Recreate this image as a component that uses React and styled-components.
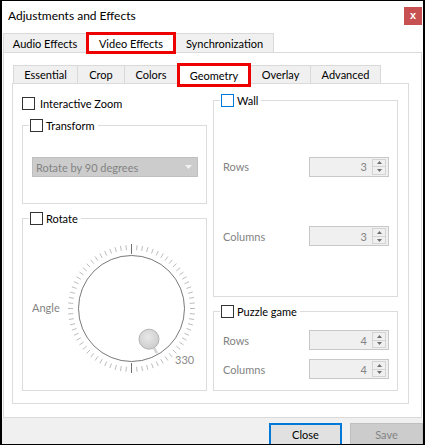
import React from "react";
import styled, { createGlobalStyle, css } from "styled-components";

const GlobalStyle = createGlobalStyle`
  html, body {
    margin: 0;
    padding: 0;
    background: #fff;
  }
  body {
    font-family: Lato, "Liberation Sans", sans-serif;
    font-size: 11px;
    color: #000;
  }
  * {
    box-sizing: border-box;
  }
`;

const Window = styled.div`
  width: 425px;
  height: 445px;
  border: solid #000;
  border-width: 1px 2px 1px 2px;
  background: #fff;
  display: flex;
  flex-direction: column;
  overflow: hidden;
`;

const TitleBar = styled.div`
  height: 31px;
  flex: none;
  display: flex;
  align-items: center;
  padding: 0 1px 2px 6px;
  font-size: 12px;
`;

const CloseX = styled.div`
  margin-left: auto;
  width: 18px;
  height: 18px;
  background: #c75050;
  color: #fff;
  font: bold 11px "Liberation Sans", sans-serif;
  display: flex;
  align-items: center;
  justify-content: center;
  padding-bottom: 2px;
`;

const TabBar = styled.div`
  flex: none;
  display: flex;
  align-items: flex-end;
  height: 20px;
  padding-left: 1px;
  position: relative;
  z-index: 1;
`;

const Tab = styled.div`
  width: ${(p) => p.$w}px;
  height: ${(p) => p.$h}px;
  display: flex;
  align-items: center;
  justify-content: center;
  background: #f0f0f0;
  border: 1px solid #d9d9d9;
  border-bottom: none;
  white-space: nowrap;
  & + & {
    margin-left: -1px;
  }
  ${(p) =>
    p.$active &&
    css`
      background: #fff;
      border: 3px solid #ee0000;
      margin-bottom: -${p.$drop}px;
      position: relative;
      z-index: 1;
    `}
`;

const Pane = styled.div`
  flex: 1;
  min-height: 0;
  margin: 0 1px;
  border: 1px solid #dadada;
  display: flex;
  flex-direction: column;
  padding: 10px 12px 13px 8px;
`;

const InnerPane = styled.div`
  flex: 1;
  border: 1px solid #dcdcdc;
  display: grid;
  grid-template-columns: 1fr 1fr;
  column-gap: 6px;
  padding: 0 10px 12px 9px;
`;

const Column = styled.div`
  display: flex;
  flex-direction: column;
  padding-top: ${(p) => p.$top}px;
  min-width: 0;
`;

const CheckRow = styled.label`
  display: flex;
  align-items: center;
  gap: ${(p) => p.$gap || 3}px;
  height: 13px;
  white-space: nowrap;
  margin-bottom: ${(p) => p.$below || 0}px;
`;

const Box = styled.span`
  width: 13px;
  height: 13px;
  flex: none;
  background: #fff;
  border: 1px solid ${(p) => (p.$focus ? "#0078d7" : "#333")};
`;

const Group = styled.fieldset`
  margin: ${(p) => p.$gapTop || 0}px 0 0;
  padding: 0;
  min-width: 0;
  border: 1px solid #dcdcdc;
  display: flex;
  flex-direction: column;
  ${(p) => p.$grow && "flex: 1;"}
`;

const Legend = styled.legend`
  margin-left: 6px;
  padding: 0 3px 0 1px;
  height: 14px;
  display: flex;
  align-items: center;
  gap: 3px;
  white-space: nowrap;
`;

const GroupBody = styled.div`
  flex: 1;
  display: flex;
  flex-direction: ${(p) => p.$dir || "column"};
  justify-content: ${(p) => p.$justify || "flex-start"};
  align-items: ${(p) => p.$align || "stretch"};
  gap: ${(p) => p.$gap || 0}px;
  padding: ${(p) => p.$pad};
`;

const Combo = styled.div`
  height: 20px;
  background: #cccccc;
  border: 1px solid #c0c0c0;
  display: flex;
  align-items: center;
  justify-content: space-between;
  padding: 0 5px 0 3px;
  color: #838383;
`;

const Muted = styled.span`
  color: #838383;
`;

const FieldRow = styled.div`
  display: flex;
  align-items: center;
  justify-content: space-between;
`;

const Spin = styled.div`
  width: 80px;
  height: 20px;
  border: 1px solid #c8c8c8;
  background: #f0f0f0;
  display: flex;
  padding: 1px 2px 1px 0;
  color: #838383;
`;

const SpinValue = styled.span`
  flex: 1;
  align-self: center;
  text-align: right;
  padding-right: 5px;
`;

const SpinArrows = styled.div`
  width: 14px;
  border: 1px solid #d4d4d4;
  display: flex;
  flex-direction: column;
`;

const SpinStep = styled.div`
  flex: 1;
  display: flex;
  align-items: center;
  justify-content: center;
  & + & {
    border-top: 1px solid #d4d4d4;
  }
`;

const Footer = styled.div`
  height: 26px;
  flex: none;
  background: #f0f0f0;
  display: flex;
  justify-content: flex-end;
  align-items: flex-start;
  gap: 8px;
  padding-top: 5px;
  overflow: hidden;
`;

const Button = styled.div`
  width: 73px;
  height: 23px;
  flex: none;
  display: flex;
  align-items: center;
  justify-content: center;
  ${(p) =>
    p.$default
      ? css`
          background: #e1e1e1;
          border: 2px solid #0078d7;
          color: #000;
        `
      : css`
          background: #cccccc;
          border: 1px solid #bfbfbf;
          color: #838383;
        `}
`;

const Triangle = ({ up, color = "#6e6e6e", w = 5, h = 3 }) => (
  <svg width={w} height={h} viewBox={`0 0 ${w} ${h}`}>
    <polygon
      points={up ? `0,${h} ${w / 2},0 ${w},${h}` : `0,0 ${w},0 ${w / 2},${h}`}
      fill={color}
    />
  </svg>
);

function SpinBox({ value }) {
  return (
    <Spin>
      <SpinValue>{value}</SpinValue>
      <SpinArrows>
        <SpinStep>
          <Triangle up />
        </SpinStep>
        <SpinStep>
          <Triangle />
        </SpinStep>
      </SpinArrows>
    </Spin>
  );
}

function AngleDial({ value }) {
  const c = 70;
  const rad = (d) => (d * Math.PI) / 180;
  const ticks = Array.from({ length: 72 }, (_, i) => i * 5);
  const a = rad(360 - value);
  const hx = c + 36 * Math.sin(a);
  const hy = c + 36 * Math.cos(a);
  return (
    <svg width="140" height="140" viewBox="0 0 140 140">
      <defs>
        <radialGradient id="knob" cx="45%" cy="40%" r="60%">
          <stop offset="0%" stopColor="#e8e8e8" />
          <stop offset="100%" stopColor="#cdcdcd" />
        </radialGradient>
      </defs>
      {ticks.map((t) => {
        const major = t % 180 === 0;
        const r1 = major ? 54.5 : 58.5;
        const r2 = major ? 64.5 : 63.5;
        return (
          <line
            key={t}
            x1={c + 0.5 + r1 * Math.sin(rad(t))}
            y1={c + 0.5 - r1 * Math.cos(rad(t))}
            x2={c + 0.5 + r2 * Math.sin(rad(t))}
            y2={c + 0.5 - r2 * Math.cos(rad(t))}
            stroke={major ? "#707070" : "#b4b4b4"}
            strokeWidth={major ? 1 : 0.9}
          />
        );
      })}
      <circle cx={c + 0.5} cy={c + 0.5} r="53" fill="#fff" stroke="#6a6a6a" strokeWidth="0.9" />
      <line
        x1={c + 46 * Math.sin(a)}
        y1={c + 46 * Math.cos(a)}
        x2={c + 52 * Math.sin(a)}
        y2={c + 52 * Math.cos(a)}
        stroke="#d4d4d4"
        strokeWidth="2.5"
      />
      <circle cx={hx} cy={hy} r="10" fill="url(#knob)" stroke="#b4b4b4" strokeWidth="1" />
      <text
        x={c + 44}
        y={c + 56}
        fontSize="11"
        fill="#8a8a8a"
        fontFamily="Lato, 'Liberation Sans', sans-serif"
      >
        {value}
      </text>
    </svg>
  );
}

const outerTabs = [
  { label: "Audio Effects", w: 84 },
  { label: "Video Effects", w: 90, active: true },
  { label: "Synchronization", w: 99 },
];

const innerTabs = [
  { label: "Essential", w: 65 },
  { label: "Crop", w: 48 },
  { label: "Colors", w: 54 },
  { label: "Geometry", w: 74, active: true },
  { label: "Overlay", w: 61 },
  { label: "Advanced", w: 71 },
];

export default function App() {
  return (
    <>
      <GlobalStyle />
      <Window>
        <TitleBar>
          <span>Adjustments and Effects</span>
          <CloseX>x</CloseX>
        </TitleBar>

        <TabBar>
          {outerTabs.map((t) => (
            <Tab key={t.label} $w={t.w} $h={t.active ? 22 : 19} $active={t.active} $drop={2}>
              {t.label}
            </Tab>
          ))}
        </TabBar>

        <Pane>
          <TabBar>
            {innerTabs.map((t) => (
              <Tab key={t.label} $w={t.w} $h={t.active ? 24 : 18} $active={t.active} $drop={4}>
                {t.label}
              </Tab>
            ))}
          </TabBar>

          <InnerPane>
            <Column $top={13}>
              <CheckRow $gap={5} $below={8}>
                <Box />
                Interactive Zoom
              </CheckRow>

              <Group>
                <Legend>
                  <Box />
                  Transform
                </Legend>
                <GroupBody $pad="25px 8px 26px 9px">
                  <Combo>
                    <span>Rotate by 90 degrees</span>
                    <Triangle color="#f2f2f2" w={7} h={4} />
                  </Combo>
                </GroupBody>
              </Group>

              <Group $grow $gapTop={7}>
                <Legend>
                  <Box />
                  Rotate
                </Legend>
                <GroupBody
                  $dir="row"
                  $align="center"
                  $justify="space-between"
                  $pad="0 5px 0 9px"
                >
                  <Muted>Angle</Muted>
                  <AngleDial value={330} />
                </GroupBody>
              </Group>
            </Column>

            <Column $top={9}>
              <Group $grow>
                <Legend>
                  <Box $focus />
                  Wall
                </Legend>
                <GroupBody $justify="space-evenly" $pad="0 8px 0 9px">
                  <FieldRow>
                    <Muted>Rows</Muted>
                    <SpinBox value={3} />
                  </FieldRow>
                  <FieldRow>
                    <Muted>Columns</Muted>
                    <SpinBox value={3} />
                  </FieldRow>
                </GroupBody>
              </Group>

              <Group $gapTop={7}>
                <Legend>
                  <Box />
                  Puzzle game
                </Legend>
                <GroupBody $gap={9} $pad="12px 8px 11px 9px">
                  <FieldRow>
                    <Muted>Rows</Muted>
                    <SpinBox value={4} />
                  </FieldRow>
                  <FieldRow>
                    <Muted>Columns</Muted>
                    <SpinBox value={4} />
                  </FieldRow>
                </GroupBody>
              </Group>
            </Column>
          </InnerPane>
        </Pane>

        <Footer>
          <Button $default>Close</Button>
          <Button>Save</Button>
        </Footer>
      </Window>
    </>
  );
}
